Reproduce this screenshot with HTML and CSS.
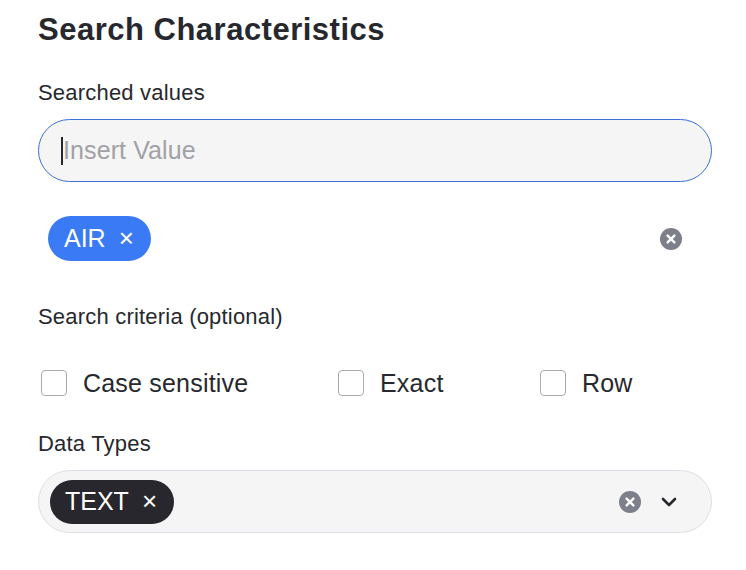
FILE: index.html
```html
<!DOCTYPE html>
<html lang="en">
<head>
<meta charset="utf-8">
<title>Search Characteristics</title>
<link rel="stylesheet" href="styles.css">
</head>
<body>
<main class="panel">
  <h1 class="title">Search Characteristics</h1>

  <div class="label label-values">Searched values</div>
  <div class="text-input">
    <span class="caret"></span><span class="placeholder">Insert Value</span>
  </div>

  <div class="chip-row">
    <span class="chip chip-blue">AIR <span class="chip-x">×</span></span>
    <span class="clear-icon">
      <svg viewBox="0 0 22 22" width="22" height="22"><circle cx="11" cy="11" r="11" fill="#7d7f8b"/><path d="M7.6 7.6 14.4 14.4M14.4 7.6 7.6 14.4" stroke="#fff" stroke-width="2.4" stroke-linecap="round"/></svg>
    </span>
  </div>

  <div class="label label-criteria">Search criteria (optional)</div>
  <div class="checks">
    <label class="check"><span class="box"></span><span>Case sensitive</span></label>
    <label class="check"><span class="box"></span><span>Exact</span></label>
    <label class="check"><span class="box"></span><span>Row</span></label>
  </div>

  <div class="label label-types">Data Types</div>
  <div class="select">
    <span class="chip chip-dark">TEXT <span class="chip-x">×</span></span>
    <span class="select-icons">
      <svg class="clear-sm" viewBox="0 0 22 22" width="22" height="22"><circle cx="11" cy="11" r="11" fill="#7d7f8b"/><path d="M7.6 7.6 14.4 14.4M14.4 7.6 7.6 14.4" stroke="#fff" stroke-width="2.4" stroke-linecap="round"/></svg>
      <svg class="chevron" viewBox="0 0 16 10" width="16" height="10"><path d="M2 2 8 8 14 2" fill="none" stroke="#27282d" stroke-width="2.6" stroke-linecap="round" stroke-linejoin="round"/></svg>
    </span>
  </div>
</main>
</body>
</html>
```

FILE: styles.css
```css
* { box-sizing: border-box; }

html, body {
  margin: 0;
  padding: 0;
  background: #ffffff;
}

body {
  font-family: "Liberation Sans", Arial, Helvetica, sans-serif;
  color: #27282d;
}

.panel {
  width: 674px;
  margin-left: 38px;
  padding-top: 12px;
}

.title {
  margin: 0;
  font-size: 31px;
  line-height: 36px;
  font-weight: 700;
  letter-spacing: 0.5px;
}

.label {
  font-size: 22px;
  line-height: 24px;
  letter-spacing: 0.2px;
}

.label-values { margin-top: 33px; }

.text-input {
  margin-top: 14px;
  height: 63px;
  border: 1px solid #3d6fd9;
  border-radius: 32px;
  background: #f5f5f5;
  display: flex;
  align-items: center;
  padding-left: 22px;
}

.caret {
  width: 2px;
  height: 28px;
  background: #27282d;
}

.placeholder {
  font-size: 25px;
  color: #a1a1a6;
  letter-spacing: 0.1px;
}

.chip-row {
  margin-top: 34px;
  height: 45px;
  display: flex;
  align-items: center;
  justify-content: space-between;
  padding-left: 10px;
  padding-right: 30px;
}

.chip {
  height: 45px;
  border-radius: 23px;
  display: inline-flex;
  align-items: center;
  color: #ffffff;
  font-size: 25px;
  padding-left: 16px;
  padding-right: 17px;
}

.chip-x {
  font-size: 26px;
  margin-left: 13px;
}

.chip-blue { background: #3b7af5; }

.chip-dark {
  background: #27272d;
  height: 44px;
  padding-left: 15px;
  padding-right: 17px;
}

.clear-icon { display: flex; }

.label-criteria { margin-top: 44px; }

.checks {
  margin-top: 40px;
  display: grid;
  grid-template-columns: 297px 202px auto;
  padding-left: 3px;
}

.check {
  display: flex;
  align-items: center;
  font-size: 25px;
  letter-spacing: 0.2px;
  height: 28px;
}

.box {
  width: 26px;
  height: 26px;
  border: 1px solid #a9abb0;
  border-radius: 4px;
  background: #ffffff;
  margin-right: 16px;
}

.label-types { margin-top: 35px; }

.select {
  margin-top: 14px;
  height: 63px;
  border: 1px solid #dcdfe6;
  border-radius: 32px;
  background: #f5f5f5;
  display: flex;
  align-items: center;
  justify-content: space-between;
  padding-left: 11px;
  padding-right: 34px;
}

.select-icons {
  display: flex;
  align-items: center;
  gap: 20px;
}

.clear-sm, .chevron { display: block; }
```
